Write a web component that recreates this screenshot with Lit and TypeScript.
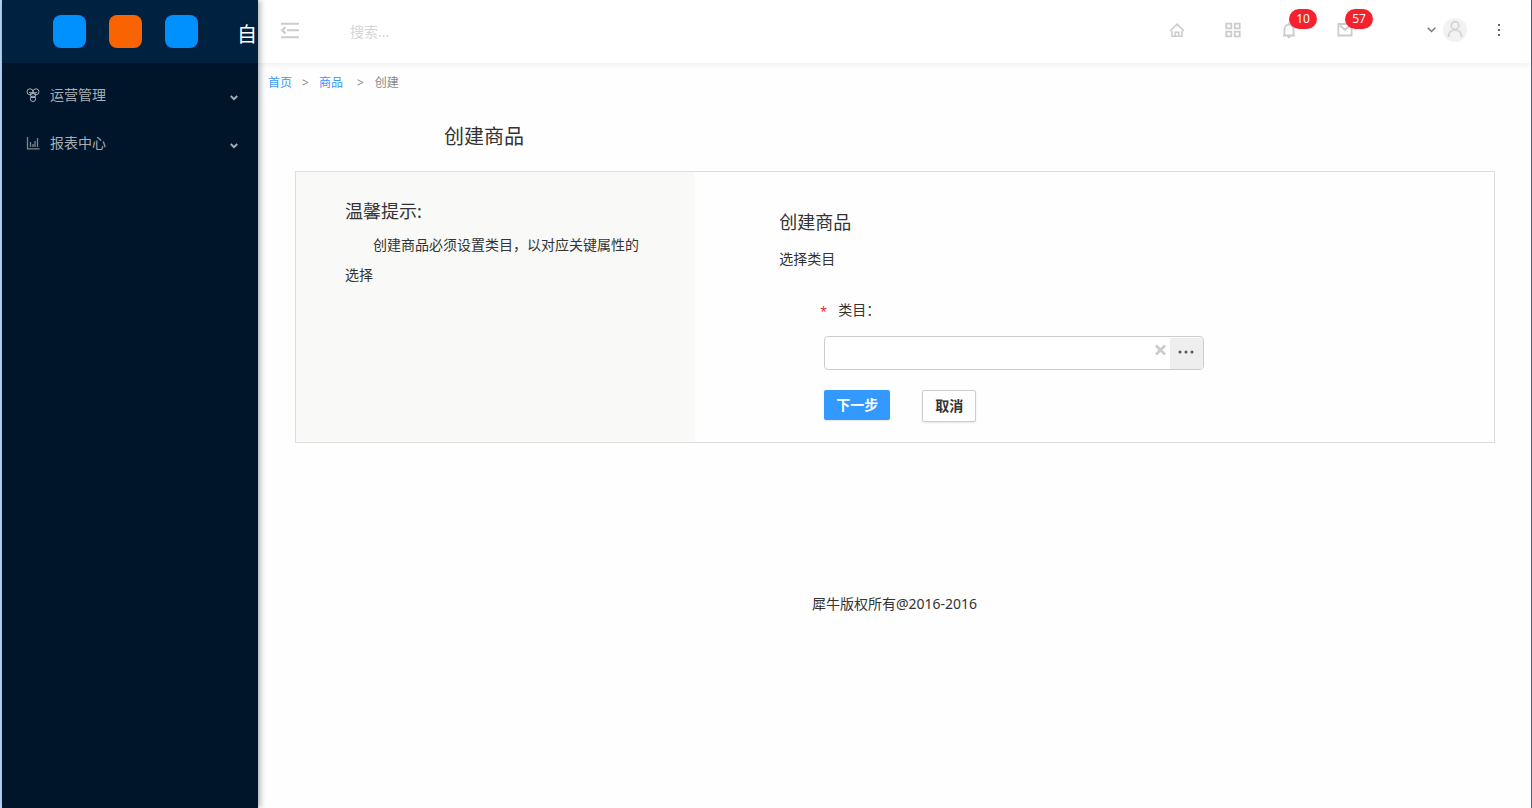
import { LitElement, html, css, svg } from "lit";
import { customElement, property } from "lit/decorators.js";

const icons: Record<string, unknown> = {
  fold: svg`<path d="M1 1.800h18M7 8.200h12M1 15.200h18" stroke-width="1.900"/><path d="M5.500 5 2.200 8.200l3.300 3.200" stroke-width="2.200"/>`,
  home: svg`<path d="M1 9 8 2.200 15 9M3 9V14.300h10V9M6.300 14v-3.700h3.400V14" stroke-width="1.600"/>`,
  grid: svg`<path d="M1.300 1.600h5v4.800h-5zM9.700 1.600h5v4.800h-5zM1.300 9.600h5v4.800h-5zM9.700 9.600h5v4.800h-5z" stroke-width="1.800"/>`,
  bell: svg`<path d="M3.500 13V7a4.500 4.500 0 0 1 9 0v6M2 13.500h12M8 .8v1.700M6.500 15h3" stroke-width="1.800"/>`,
  mail: svg`<path d="M1.400 2h13.200v11.500H1.400zM3 3.500l5 4.300 5-4.300" stroke-width="1.800"/>`,
  hive: svg`<circle cx="4" cy="3.800" r="3"/><circle cx="10" cy="3.800" r="3"/><circle cx="7" cy="7" r="2.600"/><circle cx="7" cy="10.800" r="2.700"/><path d="M5 9.500h4M3 4.500l3 .5M11 4.500 8 5"/>`,
  chart: svg`<path d="M1.500 1v11.800H13.500M4.500 6v5M7 8v3M9 5v6M11.500 2v9" stroke-width="1.300" opacity=".75"/>`,
};

@customElement("line-icon")
class LineIcon extends LitElement {
  @property() name = "home";
  @property() box = "0 0 16 16";
  static styles = css`
    :host { display: flex; }
    svg { width: 100%; height: 100%; fill: none; stroke: currentColor; }
  `;
  render() {
    return html`<svg viewBox=${this.box} aria-hidden="true">${icons[this.name]}</svg>`;
  }
}

@customElement("side-menu")
class SideMenu extends LitElement {
  static styles = css`
    :host { display: block; background: #001529; overflow: hidden; }
    .brand { box-sizing: border-box; height: 63px; padding: 0 0 1px 51px; background: #002140; display: flex; align-items: center; gap: 23px; overflow: hidden; }
    .tile { width: 33px; height: 33px; flex: none; border-radius: 8px; background: #0091ff; }
    .tile.orange { background: #fa6400; }
    .name { color: #fff; font-size: 20px; line-height: 32px; margin-left: 16px; padding-top: 8px; white-space: nowrap; }
    nav { padding-top: 8px; }
    button { all: unset; box-sizing: border-box; width: 100%; height: 48px; padding: 0 20px 0 24px; display: flex; align-items: center; gap: 10px; color: #a6adb4; font-size: 14px; cursor: pointer; }
    line-icon { width: 14px; height: 14px; }
    .label { flex: 1; }
    .chevron { width: 8px; height: 6px; margin-top: 6px; fill: none; stroke: currentColor; stroke-width: 2; }
  `;
  render() {
    return html`
      <div class="brand">
        <span class="tile"></span><span class="tile orange"></span><span class="tile"></span>
        <span class="name">自</span>
      </div>
      <nav>
        ${[["hive", "运营管理"], ["chart", "报表中心"]].map(([icon, text]) => html`
          <button type="button">
            <line-icon name=${icon} box="0 0 14 14"></line-icon>
            <span class="label">${text}</span>
            <svg class="chevron" viewBox="0 0 8 6" aria-hidden="true"><path d="M.8 1 4 4.200 7.200 1"/></svg>
          </button>`)}
      </nav>`;
  }
}

@customElement("top-bar")
class TopBar extends LitElement {
  static styles = css`
    :host { display: flex; align-items: center; box-sizing: border-box; height: 63px; padding: 0 0 3px 22px; background: #fff; box-shadow: 0 1px 6px rgba(0, 21, 41, 0.08); color: #ccc; }
    button { all: unset; cursor: pointer; }
    .fold { width: 20px; height: 17px; }
    .fold line-icon { width: 20px; height: 17px; }
    input { flex: 1; min-width: 0; margin-left: 48px; padding: 4px 2px 0; border: 0; outline: 0; background: none; font: inherit; color: #333; }
    input::placeholder { color: #d5d5d5; opacity: 1; }
    .tool { position: relative; width: 56px; height: 60px; display: flex; align-items: center; justify-content: center; }
    .tool line-icon { width: 16px; height: 16px; }
    .badge { position: absolute; left: 28px; top: 9px; width: 28px; height: 20px; border-radius: 10px; background: #f5222d; color: #fff; font-size: 12px; line-height: 20px; text-align: center; }
    .user { display: flex; align-items: center; gap: 7px; margin: 0 28px 0 54px; color: #777; }
    .user .down { width: 9px; height: 6px; fill: none; stroke: currentColor; stroke-width: 1.400; }
    .user .face { width: 24px; height: 24px; }
    .more { width: 8px; height: 14px; margin-right: 28px; }
    .more svg { display: block; width: 8px; height: 14px; fill: #666; }
  `;
  render() {
    const tools = [["home", "首页", ""], ["grid", "应用", ""], ["bell", "通知", "10"], ["mail", "消息", "57"]];
    return html`
      <button class="fold" type="button" aria-label="折叠菜单"><line-icon name="fold" box="0 0 20 17"></line-icon></button>
      <input type="text" placeholder="搜索..." aria-label="搜索" />
      ${tools.map(([icon, label, count]) => html`
        <button class="tool" type="button" aria-label=${label}>
          <line-icon name=${icon}></line-icon>
          ${count ? html`<span class="badge">${count}</span>` : ""}
        </button>`)}
      <button class="user" type="button" aria-label="用户">
        <svg class="down" viewBox="0 0 9 6"><path d="M.7.8 4.500 4.600 8.300.8"/></svg>
        <svg class="face" viewBox="0 0 24 24"><circle cx="12" cy="12" r="12" fill="#f2f2f2"/><g fill="none" stroke="#d4d4d4" stroke-width="1.700"><circle cx="12" cy="7.500" r="3.800"/><path d="M5.500 19c0-4.500 2.500-7 6.500-7s6.500 2.500 6.500 7"/></g></svg>
      </button>
      <button class="more" type="button" aria-label="更多">
        <svg viewBox="0 0 8 14"><path d="M3 1h2v2H3zM3 6h2v2H3zM3 11h2v2H3z"/></svg>
      </button>`;
  }
}

@customElement("app-root")
class AppRoot extends LitElement {
  static styles = css`
    :host {
      display: grid; grid-template-columns: 256px minmax(0, 1fr); min-height: 100vh; box-sizing: border-box;
      border-style: solid; border-width: 0 1px 0 2px; border-color: #3f6496 #3f6496 #3f6496 #b5d8fb;
      font: 14px/20px "Noto Sans", "Noto Sans CJK SC", sans-serif; color: #333; background: #fefefe;
    }
    side-menu { position: relative; z-index: 1; box-shadow: 2px 0 6px rgba(0, 21, 41, 0.35); }
    a { color: #3399ff; text-decoration: none; }
    .crumbs { display: flex; align-items: center; gap: 10px; padding: 10px 10px 0; font-size: 12px; color: #888; }
    .crumbs .wide { margin: 0 1px 0 4px; }
    h1, h2, p { margin: 0; font-weight: 400; }
    h1 { font-size: 20px; line-height: 28px; margin: 30px 0 20px 186px; }
    h2 { font-size: 18px; line-height: 28px; }
    .card { display: grid; grid-template-columns: 1fr 2fr; margin: 0 36px 0 37px; border: 1px solid #ddd; }
    .tips { background: #f9f9f7; padding: 25px 49px; }
    .tips p { text-indent: 28px; line-height: 30px; margin-top: 5px; }
    .tips p, .tips h2 { max-width: 300px; }
    form { padding: 36px 84px 20px; }
    .hint { margin-top: 13px; }
    .field { margin: 31px 0 0 45px; max-width: 380px; }
    .field label { display: flex; gap: 12px; margin-left: -4px; }
    .star { color: #f5222d; width: 6px; padding-top: 2px; font-size: 12px; }
    .field label, .star { line-height: 20px; }
    .picker { display: flex; align-items: center; box-sizing: border-box; height: 34px; margin-top: 14px; border: 1px solid #ccc; border-radius: 4px; background: #fff; overflow: hidden; }
    .picker input { flex: 1; min-width: 0; height: 32px; padding: 0 8px; border: 0; outline: 0; box-sizing: border-box; background: none; font: inherit; }
    .picker button { all: unset; display: flex; cursor: pointer; }
    .picker .clear { padding: 0 3px 6px; }
    .clear svg { width: 13px; height: 12px; stroke: #ccc; stroke-width: 2.800; }
    .picker .browse { box-sizing: border-box; width: 33px; height: 32px; padding: 12px 8px 0; margin-top: 1px; background: #eee; }
    .browse svg { width: 16px; height: 4px; fill: #555; }
    .actions { display: flex; align-items: flex-start; gap: 32px; margin: 20px 0 0 45px; }
    .actions button { box-sizing: border-box; height: 30px; padding: 0 12px; border: 0; border-radius: 2px; background: #3399ff; color: #fff; font: inherit; font-weight: 700; box-shadow: 0 1px 2px rgba(0, 0, 0, 0.1); cursor: pointer; }
    .actions .plain { height: 32px; padding: 0 12px; border: 1px solid #ccc; background: #fff; color: #333; }
    footer { text-align: center; padding: 151px 0 24px; }
  `;
  render() {
    return html`
      <side-menu></side-menu>
      <div class="page">
        <top-bar></top-bar>
        <main>
          <nav class="crumbs" aria-label="位置">
            <a href="#">首页</a><span>&gt;</span><a href="#">商品</a><span class="wide">&gt;</span><span>创建</span>
          </nav>
          <h1>创建商品</h1>
          <section class="card">
            <aside class="tips">
              <h2>温馨提示:</h2>
              <p>创建商品必须设置类目，以对应关键属性的选择</p>
            </aside>
            <form>
              <h2>创建商品</h2>
              <p class="hint">选择类目</p>
              <div class="field">
                <label for="category"><span class="star">*</span><span>类目：</span></label>
                <div class="picker">
                  <input id="category" type="text" />
                  <button class="clear" type="button" aria-label="清除"><svg viewBox="0 0 12 12"><path d="M1.500 1.500l9 9M10.500 1.500l-9 9"/></svg></button>
                  <button class="browse" type="button" aria-label="选择"><svg viewBox="0 0 16 4"><circle cx="2" cy="2" r="1.500"/><circle cx="8" cy="2" r="1.500"/><circle cx="14" cy="2" r="1.500"/></svg></button>
                </div>
              </div>
              <div class="actions">
                <button type="button">下一步</button>
                <button class="plain" type="button">取消</button>
              </div>
            </form>
          </section>
        </main>
        <footer>犀牛版权所有@2016-2016</footer>
      </div>`;
  }
}
